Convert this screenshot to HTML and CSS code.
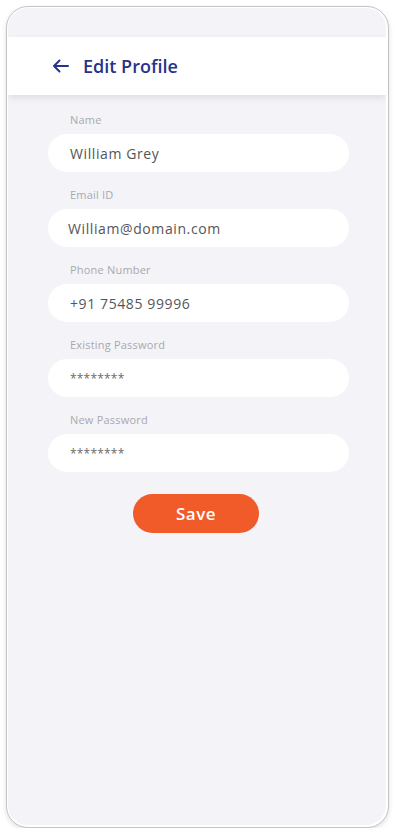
FILE: index.html
```html
<!DOCTYPE html>
<html lang="en">
<head>
<meta charset="utf-8">
<title>Edit Profile</title>
<link rel="stylesheet" href="styles.css">
</head>
<body>
<div class="phone">
  <div class="screen">
    <div class="status"></div>
    <header class="topbar">
      <svg class="back" width="17" height="14" viewBox="0 0 17 14" aria-hidden="true">
        <path d="M16 7H2M7.5 1.5L2 7l5.5 5.5" fill="none" stroke="#27338c" stroke-width="2" stroke-linecap="round" stroke-linejoin="round"/>
      </svg>
      <h1 class="title">Edit Profile</h1>
    </header>
    <form class="form">
      <div class="field">
        <label class="label">Name</label>
        <div class="input">William Grey</div>
      </div>
      <div class="field">
        <label class="label">Email ID</label>
        <div class="input input-tight">William@domain.com</div>
      </div>
      <div class="field">
        <label class="label">Phone Number</label>
        <div class="input">+91 75485 99996</div>
      </div>
      <div class="field">
        <label class="label">Existing Password</label>
        <div class="input pass">********</div>
      </div>
      <div class="field">
        <label class="label">New Password</label>
        <div class="input pass">********</div>
      </div>
      <div class="actions">
        <button type="button" class="save">Save</button>
      </div>
    </form>
  </div>
</div>
</body>
</html>
```
FILE: styles.css
```css
* { box-sizing: border-box; }
html, body {
  margin: 0;
  padding: 0;
  background: #ffffff;
  font-family: "Open Sans", "Noto Sans", sans-serif;
}
.phone {
  margin: 6px 0 0 6px;
  width: 383px;
  height: 822px;
  border: 1px solid #c4c4c4;
  border-radius: 22px;
  padding: 1px 2px 2px 1px;
  background: #ffffff;
  box-shadow: 0 2px 5px rgba(0,0,0,0.12);
}
.screen {
  height: 100%;
  background: #f3f3f8;
  border-radius: 20px;
  overflow: hidden;
  display: flex;
  flex-direction: column;
}
.status {
  height: 29px;
  flex: none;
}
.topbar {
  height: 58px;
  flex: none;
  background: #ffffff;
  display: flex;
  align-items: center;
  padding-left: 44px;
  gap: 14px;
  box-shadow: 0 3px 7px rgba(0,0,0,0.09);
  position: relative;
  z-index: 1;
}
.back { display: block; }
.title {
  margin: 0;
  font-size: 18px;
  font-weight: 600;
  color: #27338c;
  letter-spacing: 0;
}
.form {
  padding: 18px 0 0 40px;
  display: flex;
  flex-direction: column;
  gap: 16px;
}
.field {
  display: flex;
  flex-direction: column;
  gap: 7px;
}
.label {
  font-size: 11px;
  line-height: 14px;
  color: #a9a9ad;
  padding-left: 22px;
  letter-spacing: 0.2px;
}
.input {
  width: 301px;
  height: 38px;
  border-radius: 19px;
  background: #ffffff;
  display: flex;
  align-items: center;
  padding-left: 22px;
  font-size: 14px;
  color: #555558;
  letter-spacing: 0.6px;
}
.input-tight { padding-left: 20px; }
.pass {
  font-size: 12px;
  letter-spacing: 0.2px;
  color: #6a6a6a;
}
.actions {
  display: flex;
  justify-content: center;
  width: 301px;
  padding-right: 5px;
  margin-top: 6px;
}
.save {
  width: 126px;
  height: 39px;
  border: none;
  border-radius: 20px;
  background: #f15a29;
  color: #ffffff;
  font-family: "Open Sans", "Noto Sans", sans-serif;
  font-size: 17px;
  font-weight: 600;
  letter-spacing: 0.5px;
  padding: 0;
}
```
